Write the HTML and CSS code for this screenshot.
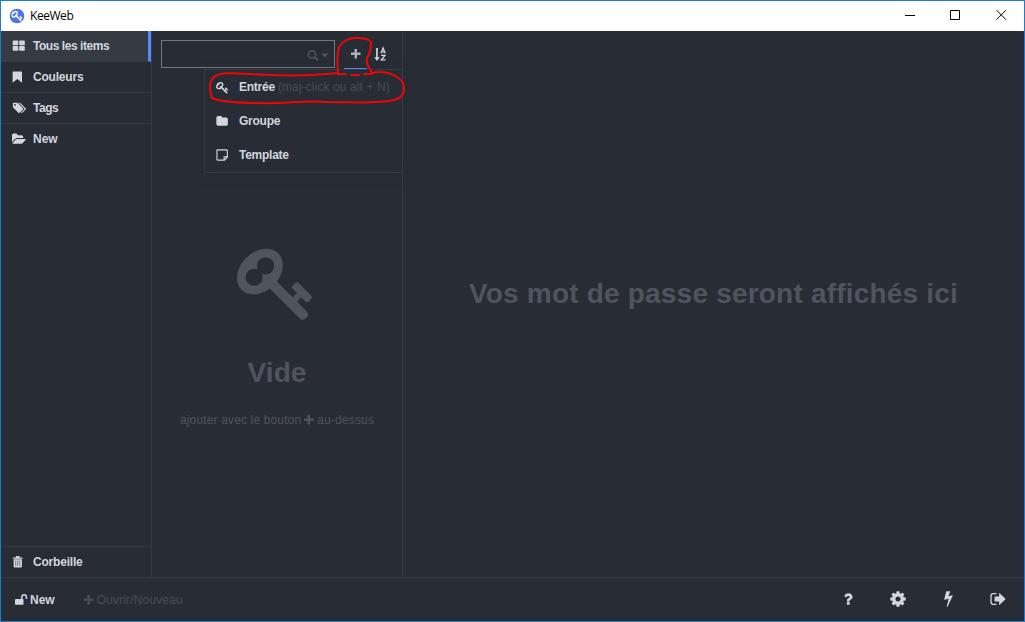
FILE: index.html
```html
<!DOCTYPE html>
<html lang="fr">
<head>
<meta charset="utf-8">
<title>KeeWeb</title>
<link rel="stylesheet" href="styles.css">
</head>
<body>
<svg class="defs" width="0" height="0">
  <symbol id="key" viewBox="0 0 1792 1792"><path d="M832 512q0-80-56-136t-136-56-136 56-56 136q0 42 19 83-41-19-83-19-80 0-136 56t-56 136 56 136 136 56 136-56 56-136q0-42-19-83 41 19 83 19 80 0 136-56t56-136zm851 704q0 17-49 66t-66 49q-9 0-28.5-16t-36.5-33-38.5-40-24.5-26l-96 96 220 220q28 28 28 68 0 42-39 81t-81 39q-40 0-68-28l-671-671q-176 131-365 131-163 0-265.5-102.5t-102.5-265.5q0-160 95-313t248-248 313-95q163 0 265.5 102.5t102.5 265.5q0 189-131 365l355 355 96-96q-3-3-26-24.5t-40-38.5-33-36.5-16-28.5q0-17 49-66t66-49q13 0 23 10 6 6 46 44.5t82 79.5 86.5 86 73 78 28.5 41z"/></symbol>
  <symbol id="plus" viewBox="0 0 12 12"><path d="M4.500 1h2.500v3.500h3.500V7H7v3.500H4.500V7H1V4.500h3.500z"/></symbol>
</svg>
<div class="window">
  <header class="titlebar">
    <svg class="logo" width="16" height="16" viewBox="0 0 16 16"><circle cx="8" cy="8" r="7.3" fill="#4d74e0"/><use href="#key" x="2.2" y="2" width="12" height="12" fill="#fff"/></svg>
    <span class="app-name">KeeWeb</span>
    <svg class="controls" width="104" height="12" viewBox="0 0 104 12"><path d="M0 6.500h10M45.500 1.500h9v9h-9zM91.500 1.200l9.500 9.500M101 1.200l-9.500 9.500" fill="none" stroke="#000"/></svg>
  </header>
  <main class="body">
    <nav class="sidebar">
      <a class="item active"><svg width="14" height="14" viewBox="0 0 14 14"><rect x=".7" y="1.600" width="5.600" height="4.600" rx=".8"/><rect x="7.200" y="1.600" width="5.600" height="4.600" rx=".8"/><rect x=".7" y="7.100" width="5.600" height="4.600" rx=".8"/><rect x="7.200" y="7.100" width="5.600" height="4.600" rx=".8"/></svg><span class="tight">Tous les items</span></a>
      <a class="item"><svg width="14" height="14" viewBox="0 0 14 14"><path d="M1.300 1.500h7.900q.8 0 .8.800v10.500L5.400 9 .6 12.800V2.300q0-.8.700-.8z"/></svg><span>Couleurs</span></a>
      <a class="item"><svg width="15" height="14" viewBox="0 0 2048 1792"><path d="M576 448q0-53-37.500-90.500t-90.500-37.500-90.500 37.500-37.500 90.500 37.500 90.500 90.500 37.500 90.500-37.500 37.500-90.500zm1067 576q0 53-37 90l-491 492q-39 37-91 37-53 0-90-37l-715-716q-38-37-64.500-101t-26.500-117v-416q0-52 38-90t90-38h416q53 0 117 26.500t102 64.500l715 714q37 39 37 91zm384 0q0 53-37 90l-491 492q-39 37-91 37-36 0-59-14t-53-45l470-470q37-37 37-90 0-52-37-91l-715-714q-38-38-102-64.500t-117-26.500h224q53 0 117 26.500t102 64.500l715 714q37 39 37 91z"/></svg><span class="tight">Tags</span></a>
      <a class="item"><svg width="14" height="14" viewBox="0 0 1920 1792"><path d="M1879 952q0 31-31 66l-336 396q-43 51-120.500 86.500t-143.500 35.500h-1088q-34 0-60.500-13t-26.500-43q0-31 31-66l336-396q43-51 120.500-86.500t143.500-35.500h1088q34 0 60.500 13t26.500 43zm-343-344v160h-832q-94 0-197 47.500t-164 119.500l-337 396-5 6q0-4-.5-12.500t-.5-12.500v-960q0-92 66-158t158-66h320q92 0 158 66t66 158v32h544q92 0 158 66t66 158z"/></svg><span class="wide">New</span></a>
      <a class="item trash"><svg width="14" height="14" viewBox="0 0 14 14"><path d="M3.500 2.500L4.300 1h2.900L8 2.500h2.600v1.200H.9V2.500z"/><path d="M1.600 4.200h8.300v7.300q0 1-1 1H2.600q-1 0-1-1z"/><path d="M3.700 5.500v5.500M5.700 5.500v5.500M7.700 5.500v5.500" stroke="#6b6f79" stroke-width=".8"/></svg><span>Corbeille</span></a>
    </nav>
    <section class="list">
      <div class="list-head">
        <div class="search"><svg width="22" height="14" viewBox="0 0 22 14"><circle cx="5" cy="5.500" r="3.700" fill="none" stroke="#50545f" stroke-width="1.500"/><path d="M7.800 8.300l3 3" stroke="#50545f" stroke-width="2"/><path d="M14 4.500h7.500L17.750 8.500z" fill="#50545f"/></svg></div>
        <div class="add"><svg width="12" height="12"><use href="#plus"/></svg></div>
        <svg class="sort" width="13" height="15" viewBox="0 0 13 15"><path d="M2.100 1h1.700v9.200h2L3 14 .2 10.200h1.900z"/><path d="M7 6.300L9.100 1l2.100 5.300M7.800 4.900h2.600M7.100 8.400h3.900L7.300 12.900h4.200" fill="none" stroke="#d3d6de" stroke-width="1.300"/></svg>
      </div>
      <div class="empty">
        <svg width="80" height="80"><use href="#key"/></svg>
        <h2>Vide</h2>
        <p><span>ajouter avec le bouton</span><svg width="12" height="12"><use href="#plus"/></svg><span>au-dessus</span></p>
      </div>
      <div class="menu">
        <div class="option"><svg width="13" height="13"><use href="#key"/></svg><span>Entrée <small>(maj-click ou alt + N)</small></span></div>
        <div class="option"><svg width="13" height="13" viewBox="0 0 14 14"><path d="M2.400 1.200h2.700q1.300 0 1.300 1.300v.3h4.700q1.700 0 1.700 1.700v5.300q0 1.700-1.700 1.700H2.200Q.4 11.500.4 9.800V3Q.4 1.200 2.400 1.200z"/></svg><span>Groupe</span></div>
        <div class="option"><svg width="13" height="13" viewBox="0 0 14 14"><path d="M1.600 1h10q.6 0 .6.600V8.800l-3.200 3.200H1.600q-.6 0-.6-.6V1.600q0-.6.600-.6zM12.200 8.500H8.700v3.500" fill="none" stroke="#d3d6de" stroke-width="1.200"/></svg><span>Template</span></div>
      </div>
    </section>
    <section class="details"><h1>Vos mot de passe seront affichés ici</h1></section>
  </main>
  <footer class="footer">
    <a class="db"><svg width="14" height="14" viewBox="0 0 14 14"><path d="M2 6h6.800q.7 0 .7.700v4.300q0 .7-.7.700H1.700q-.7 0-.7-.7V6.700q0-.7 1-.7z"/><path d="M7.800 7V4a2.300 2.300 0 0 1 4.600 0v2" fill="none" stroke="#d3d6de" stroke-width="1.500"/></svg><span>New</span></a>
    <a class="open"><svg width="12" height="12"><use href="#plus"/></svg><span>Ouvrir/Nouveau</span></a>
    <div class="tools">
      <svg width="16" height="16" viewBox="0 0 1792 1792"><path d="M1088 1256v240q0 16-12 28t-28 12h-240q-16 0-28-12t-12-28v-240q0-16 12-28t28-12h240q16 0 28 12t12 28zm316-600q0 54-15.500 101t-35 76.500-55 59.500-57.500 43.500-61 35.500q-41 23-68.500 65t-27.500 67q0 17-12 32.500t-28 15.500h-240q-15 0-25.500-18.500t-10.500-37.500v-45q0-83 65-156.500t143-108.500q59-27 84-56t25-76q0-42-46.500-74t-107.500-32q-65 0-108 29-35 25-107 115-13 16-31 16-12 0-25-8l-164-125q-13-10-15.500-25t5.500-28q160-266 464-266 80 0 161 31t146 83 106 127.500 41 158.500z"/></svg>
      <svg width="18" height="18" viewBox="0 0 1792 1792"><path d="M1152 896q0-106-75-181t-181-75-181 75-75 181 75 181 181 75 181-75 75-181zm512-109v222q0 12-8 23t-20 13l-185 28q-19 54-39 91 35 50 107 138 10 12 10 25t-9 23q-27 37-99 108t-94 71q-12 0-26-9l-138-108q-44 23-91 38-16 136-29 186-7 28-36 28h-222q-14 0-24.500-8.500t-11.500-21.500l-28-184q-49-16-90-37l-141 107q-10 9-25 9-14 0-25-11-126-114-165-168-7-10-7-23 0-12 8-23 15-21 51-66.500t54-70.500q-27-50-41-99l-183-27q-13-2-21-12.500t-8-23.500v-222q0-12 8-23t19-13l186-28q14-46 39-92-40-57-107-138-10-12-10-24 0-10 9-23 26-36 98.500-107.500t94.500-71.500q13 0 26 10l138 107q44-23 91-38 16-136 29-186 7-28 36-28h222q14 0 24.500 8.500t11.500 21.500l28 184q49 16 90 37l142-107q9-9 24-9 13 0 25 10 129 119 165 170 7 8 7 22 0 12-8 23-15 21-51 66.500t-54 70.500q26 50 41 98l183 28q13 2 21 12.500t8 23.500z"/></svg>
      <svg width="17" height="17" viewBox="0 0 1792 1792"><path d="M1333 566q18 20 7 44l-540 1157q-13 25-42 25-4 0-14-2-17-5-25.500-19t-4.500-30l197-808-406 101q-4 1-12 1-18 0-31-11-18-15-13-39l201-825q4-14 16-23t28-9h328q19 0 32 12.500t13 29.500q0 8-5 18l-171 463 396-98q8-2 12-2 19 0 34 15z"/></svg>
      <svg width="16" height="14" viewBox="0 0 16 14"><path d="M6.500 1.700H3.200Q1 1.700 1 3.900v6.200q0 2.200 2.200 2.200h3.300" fill="none" stroke="#d3d6de" stroke-width="1.300"/><path d="M4.600 4.900q0-.5.500-.5h4V1.500q0-.8.600-.3l5.500 5.300q.4.500 0 1L9.700 12.800q-.6.500-.6-.3V9.600h-4q-.5 0-.5-.5z"/></svg>
    </div>
  </footer>
</div>
<svg class="marks" width="1025" height="622" viewBox="0 0 1025 622"><path d="M338 74C338 65 336 57 339 47C343 40 349 38 357 38C364 38 369 39 371 42C371 47 371 52 368 56C365 61 367 65 370 69L372 74M338 74h8M351 75h8M364 74h8M372 73C386 70 398 75 403 83C406 91 403 98 394 100C378 104 352 102 328 102C306 100 283 104 257 103C238 103 222 102 212 98C209 90 209 81 214 77C220 72 232 73 249 74C279 76 310 76 338 73"/></svg>
</body>
</html>
```

FILE: styles.css
```css
* { box-sizing: border-box; }
body { margin: 0; font-family: "Liberation Sans", Arial, sans-serif; font-size: 12px; color: #d3d6de; }
svg { display: block; flex: none; fill: currentColor; overflow: visible; }
.defs { position: absolute; }
.window { width: 1025px; height: 622px; border: 1px solid #1a7fd4; background: #282c34; display: flex; flex-direction: column; overflow: hidden; }
.titlebar { height: 30px; flex: none; display: flex; align-items: center; padding: 0 15px 2px 8px; background: #fff; color: #000; }
.logo { margin-top: 1px; }
.app-name { font-family: "Open Sans", "Noto Sans", sans-serif; font-size: 12px; letter-spacing: -.45px; margin-left: 5px; }
.controls { margin-left: auto; }
.body { flex: 1; display: flex; min-height: 0; }
.sidebar { width: 151px; border-right: 1px solid #363a43; display: flex; flex-direction: column; font-weight: bold; }
.item { height: 31px; flex: none; display: flex; align-items: center; padding-left: 11px; border-bottom: 1px solid #363a43; }
.item span { margin-left: 7px; letter-spacing: -.2px; }
.item .tight { letter-spacing: -.45px; }
.item .wide { letter-spacing: 0; }
.item svg { width: 14px; }
.item:nth-child(4) { border-bottom-color: transparent; }
.active { background: #363a43; border-right: 3px solid #528bff; }
.trash { margin-top: auto; border-bottom: 0; border-top: 1px solid #363a43; }
.list { width: 251px; position: relative; border-right: 1px solid #363a43; }
.list-head { height: 38px; display: flex; padding: 9px 0 0 9px; }
.search { width: 174px; height: 28px; border: 1px solid #73767e; display: flex; align-items: center; justify-content: flex-end; padding: 3px 5px 0 0; }
.add { width: 23px; height: 29px; margin-left: 9px; padding-top: 8px; display: flex; justify-content: center; border-bottom: 1px solid #528bff; color: #abb0bb; }
.sort { margin: 7px 0 0 7px; }
.empty { display: flex; flex-direction: column; align-items: center; color: #50545f; padding-top: 174px; }
h1, h2 { margin: 0; font-size: 28px; line-height: 34px; font-weight: bold; color: #50545f; }
h2 { margin-top: 33px; letter-spacing: .1px; }
.empty p { display: flex; align-items: center; margin: 22px 0 0; line-height: 16px; gap: 2px; letter-spacing: .15px; }
.menu { position: absolute; left: 52px; top: 38px; width: 199px; height: 104px; border: 1px solid #363a43; background: #282c34; box-shadow: 0 3px 14px rgba(30, 33, 40, .12); }
.option { height: 34px; display: flex; align-items: center; padding-left: 11px; font-weight: bold; letter-spacing: -.25px; }
.option span { margin-left: 10px; white-space: nowrap; }
small { font-size: 12px; font-weight: normal; color: #484c56; letter-spacing: .1px; }
.details { flex: 1; display: flex; justify-content: center; padding-top: 246px; }
h1 { letter-spacing: .2px; }
.footer { height: 44px; flex: none; border-top: 1px solid #363a43; display: flex; align-items: center; padding: 0 18px 0 13px; }
.db, .open { display: flex; align-items: center; }
.db { font-weight: bold; gap: 2px; }
.open { margin-left: 28px; gap: 2px; color: #484c56; letter-spacing: .15px; }
.tools { margin: 0 0 2px auto; display: flex; align-items: center; gap: 33px; }
.marks { position: absolute; left: 0; top: 0; fill: none; stroke: #f00505; stroke-width: 2; stroke-linecap: round; stroke-linejoin: round; pointer-events: none; }
```
